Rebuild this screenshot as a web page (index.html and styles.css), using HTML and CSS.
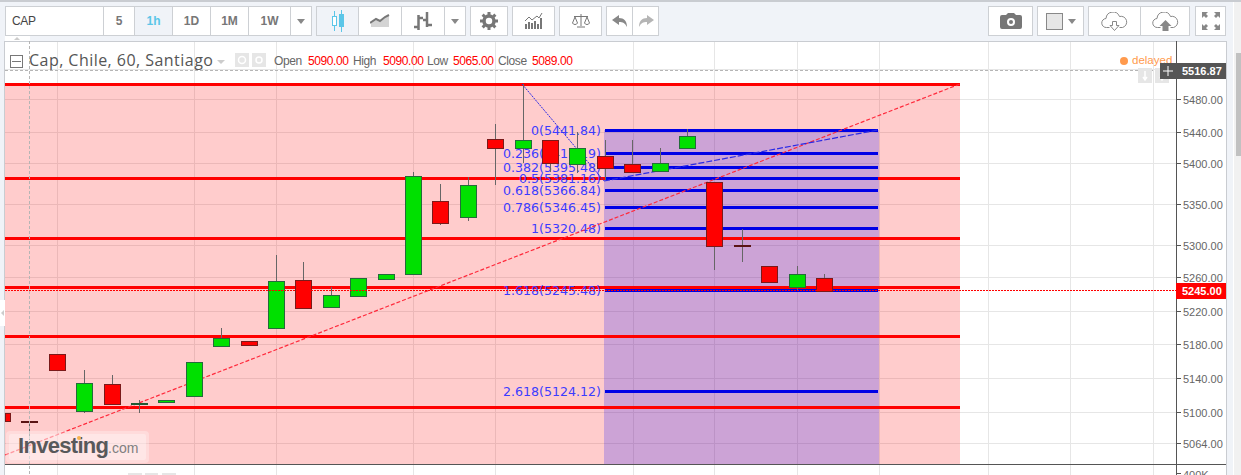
FILE: index.html
```html
<!DOCTYPE html>
<html lang="en">

<head>
  <meta charset="UTF-8">
  <title>Cap, Chile, 60, Santiago</title>
  <link rel="stylesheet" href="styles.css">
</head>

<body>
  <div class="page">
    <div class="main">
      <div class="toolbar">
        <div class="group">
          <div class="btn btn-symbol">CAP</div>
          <div class="btn w31">5</div>
          <div class="btn w38 active">1h</div>
          <div class="btn w38">1D</div>
          <div class="btn w38">1M</div>
          <div class="btn w42">1W</div>
          <div class="btn w21"><span class="caret"></span></div>
        </div>
        <div class="group">
          <div class="btn w41 active">
            <svg width="20" height="22" viewBox="0 0 20 22"><path class="ic-blue" d="M6.500 1v5M6.500 16v5M13.500 0v5M13.500 17v5" /><rect class="ic-blue-box" x="4.500" y="6.500" width="4" height="9" /><rect x="11" y="4" width="5" height="13" fill="#5bc6e8" /></svg>
          </div>
          <div class="btn w43">
            <svg width="20" height="14" viewBox="0 0 20 14"><path d="M1 13V9l5-3 4 2 5-4 4-2v11z" fill="#d4d4d4" /><path d="M0 9l6-4 4 2 5-4 4-2" fill="none" stroke="#777" stroke-width="2" /></svg>
          </div>
          <div class="btn w43">
            <svg width="18" height="18" viewBox="0 0 18 18"><path d="M0 15h5M4.500 18V3M5 6h4M13 0v15M9 8h4M13 13h5" fill="none" stroke="#777" stroke-width="2.500" /></svg>
          </div>
          <div class="btn w21"><span class="caret"></span></div>
        </div>
        <div class="group">
          <div class="btn w36">
            <svg width="18" height="18" viewBox="0 0 18 18"><circle cx="9" cy="9" r="5" fill="none" stroke="#777" stroke-width="3.500" /><path d="M9 0v18M0 9h18M2.600 2.600l12.800 12.800M15.400 2.600L2.600 15.400" stroke="#777" stroke-width="3" stroke-dasharray="3 12 3 0" /></svg>
          </div>
        </div>
        <div class="group">
          <div class="btn w41">
            <svg width="18" height="16" viewBox="0 0 18 16"><path d="M1 16v-5M4 16V9M7 16v-6M10 16V8M13 16v-5M16 16V5" stroke="#777" stroke-width="2" /><path d="M0 8l4-4 3 3 5-4 2 2 3-5" fill="none" stroke="#777" /></svg>
          </div>
        </div>
        <div class="group">
          <div class="btn w41">
            <svg width="18" height="14" viewBox="0 0 18 14"><path d="M9 0v12M5 13h8M2 2.500h14" stroke="#777" /><path d="M3 3L.5 9a2.800 2.800 0 0 0 5 0zM15 3l-2.500 6a2.800 2.800 0 0 0 5 0z" fill="none" stroke="#777" /></svg>
          </div>
        </div>
        <div class="group">
          <div class="btn w25">
            <svg width="16" height="12" viewBox="0 0 16 12"><path d="M0 5l7-5v3c5 0 8 3 8 9-2-4-4-5-8-5v3z" fill="#888" /></svg>
          </div>
          <div class="btn w26">
            <svg width="16" height="12" viewBox="0 0 16 12"><path d="M16 5L9 0v3c-5 0-8 3-8 9 2-4 4-5 8-5v3z" fill="#b5b5b5" /></svg>
          </div>
        </div>
        <div class="toolbar-right">
          <div class="group">
            <div class="btn w43">
              <svg width="22" height="16" viewBox="0 0 22 16"><path fill-rule="evenodd" d="M2 2h4l2-2h6l2 2h4a2 2 0 0 1 2 2v10a2 2 0 0 1-2 2H2a2 2 0 0 1-2-2V4a2 2 0 0 1 2-2zm9 3a4 4 0 1 0 0 8 4 4 0 0 0 0-8zm0 2a2 2 0 1 1 0 4 2 2 0 0 1 0-4z" fill="#777" /></svg>
            </div>
          </div>
          <div class="group">
            <div class="btn w45 color-btn"><span class="swatch"></span><span class="caret"></span></div>
          </div>
          <div class="group">
            <div class="btn w51">
              <svg width="27" height="19" viewBox="0 0 27 19"><path d="M8.500 15.500H5.500a4.500 4.500 0 0 1-.5-9 7 7 0 0 1 13.500-2 5.500 5.500 0 0 1 3 11h-3" fill="none" stroke="#888" /><path d="M11.500 9.500h4v4h2.500l-4.500 5-4.500-5h2.500z" fill="#fff" stroke="#888" /></svg>
            </div>
            <div class="btn w49">
              <svg width="27" height="19" viewBox="0 0 27 19"><path d="M8.500 15.500H5.500a4.500 4.500 0 0 1-.5-9 7 7 0 0 1 13.500-2 5.500 5.500 0 0 1 3 11h-3" fill="none" stroke="#888" /><path d="M13.500 8l6 6h-3v5h-6v-5h-3z" fill="#888" /></svg>
            </div>
          </div>
          <div class="group">
            <div class="btn w29">
              <svg width="18" height="18" viewBox="0 0 18 18"><path d="M0 0h6L4 2l2 2-2 2-2-2-2 2zM18 0h-6l2 2-2 2 2 2 2-2 2 2zM0 18h6l-2-2 2-2-2-2-2 2-2-2zM18 18h-6l2-2-2-2 2-2 2 2 2-2z" fill="#888" /></svg>
            </div>
          </div>
        </div>
      </div>

      <svg class="chart" width="1233" height="439" viewBox="0 36 1233 439">
        <rect class="frame" x="4.500" y="41.500" width="1222" height="440" />
        <rect class="tab" x="5" y="36" width="25" height="5" />
        <path class="tab-arrow" d="M14 40l3-3 3 3z" />

        <!-- grid, filled in by chart.js -->
        <g id="grid"></g>

        <rect class="zone-red" x="5" y="84" width="955" height="380" />
        <rect class="zone-blue" x="604" y="130" width="275" height="334" />

        <g id="levels"></g>

        <g class="fib-labels">
          <text x="601" y="135">0(5441.84)</text>
          <text x="601" y="158">0.236(5413.19)</text>
          <text x="601" y="172">0.382(5395.48)</text>
          <text x="601" y="183">0.5(5381.16)</text>
          <text x="601" y="195">0.618(5366.84)</text>
          <text x="601" y="212">0.786(5346.45)</text>
          <text x="601" y="233">1(5320.48)</text>
          <text x="601" y="295">1.618(5245.48)</text>
          <text x="601" y="396">2.618(5124.12)</text>
        </g>

        <line class="trend-red" x1="5" y1="455" x2="960" y2="84" />
        <line class="trend-blue-dot" x1="522" y1="84" x2="604" y2="181" />
        <line class="trend-blue" x1="604" y1="181" x2="878" y2="130" />

        <g id="candles"></g>

        <line class="last-price" x1="5" y1="290.500" x2="1176" y2="290.500" />
        <line class="crosshair" x1="5" y1="70.500" x2="1176" y2="70.500" />
        <line class="crosshair" x1="29.500" y1="41" x2="29.500" y2="475" />

        <!-- legend -->
        <rect class="collapse" x="10.500" y="55.500" width="12" height="12" />
        <line class="collapse-minus" x1="12" y1="61.500" x2="21" y2="61.500" />
        <text class="legend-title" x="29" y="66">Cap, Chile, 60, Santiago</text>
        <path class="legend-caret" d="M217 60h8l-4 4z" />
        <rect class="legend-box" x="235" y="53" width="14" height="14" />
        <circle class="legend-eye" cx="242" cy="60" r="3.500" />
        <rect class="legend-box" x="252" y="53" width="14" height="14" />
        <circle class="legend-eye" cx="259" cy="60" r="3" />
        <g class="legend-values">
          <text x="274" y="65">Open</text>
          <text class="val" x="308" y="65">5090.00</text>
          <text x="353" y="65">High</text>
          <text class="val" x="383" y="65">5090.00</text>
          <text x="427" y="65">Low</text>
          <text class="val" x="453" y="65">5065.00</text>
          <text x="498" y="65">Close</text>
          <text class="val" x="532" y="65">5089.00</text>
        </g>

        <circle class="delayed-dot" cx="1124" cy="61" r="4" />
        <text class="delayed" x="1132" y="64">delayed</text>

        <rect class="legend-box" x="1138" y="68" width="14" height="15" />
        <path class="mini-arrow" d="M1145 71v9M1143 77l2 3 2-3" />
        <rect class="legend-box" x="1155" y="68" width="14" height="15" />
        <path class="mini-arrow" d="M1162 71v9M1160 77l2 3 2-3" />

        <!-- logo -->
        <rect class="logo-outer" x="6" y="431" width="143" height="32" rx="4" />
        <rect class="logo-inner" x="9" y="434" width="137" height="26" rx="2" />
        <text class="logo-name" x="18" y="453">Investing</text>
        <text class="logo-com" x="108" y="453">.com</text>
        <circle class="logo-dot" cx="79" cy="438" r="2" />

        <!-- price axis -->
        <rect class="axis-bg" x="1177" y="42" width="49" height="433" />
        <line class="axis-line" x1="1176.500" y1="41" x2="1176.500" y2="475" />
        <line class="axis-line" x1="5" y1="464.500" x2="1226" y2="464.500" />
        <g id="axis"></g>

        <rect class="tag-dark" x="1160" y="63" width="66" height="16" />
        <path class="tag-plus" d="M1168 66v10M1163 71h10" />
        <text class="tag-text" x="1182" y="75">5516.87</text>
        <rect class="tag-red" x="1176" y="283" width="50" height="16" />
        <text class="tag-text" x="1182" y="295">5245.00</text>

        <text class="axis-text" x="1183" y="479">400K</text>
        <line class="axis-line" x1="1176" y1="473.500" x2="1181" y2="473.500" />

        <!-- small controls along the bottom and the left edge -->
        <rect class="legend-box" x="128" y="473" width="14" height="2" />
        <rect class="legend-box" x="145" y="473" width="13" height="2" />
        <rect class="legend-box" x="162" y="473" width="14" height="2" />
        <rect class="side-tab" x="0" y="300" width="5" height="26" />
        <path class="side-arrow" d="M1 313l3-3v6z" />
      </svg>
    </div>
    <div class="scrollbar"><div class="thumb"></div></div>
  </div>
  <script src="chart.js"></script>
</body>

</html>
```

FILE: styles.css
```css
* {
  box-sizing: border-box;
  margin: 0;
  padding: 0;
}

body {
  font-family: "Liberation Sans", Arial, sans-serif;
  background: #f0f3f8;
  overflow: hidden;
}

.page {
  display: flex;
  height: 475px;
  border-top: 2px solid #c9ccd1;
}

.main {
  width: 1233px;
}

/* Toolbar */
.toolbar {
  display: flex;
  gap: 4px;
  height: 34px;
  padding: 4px 7px 0 5px;
}

.toolbar-right {
  display: flex;
  gap: 4px;
  margin-left: auto;
}

.toolbar-right .group:last-child {
  margin-left: 1px;
}

.group {
  display: flex;
  box-sizing: content-box;
  height: 28px;
  border: 1px solid #cdd0d4;
  background: #fff;
}

.btn {
  display: flex;
  align-items: center;
  justify-content: center;
  border-left: 1px solid #cdd0d4;
  font-size: 12px;
  font-weight: bold;
  color: #777;
}

.btn:first-child {
  border-left: none;
}

.btn.active {
  background: #f0f3f8;
  color: #5bc6e8;
}

.btn-symbol {
  width: 97px;
  justify-content: flex-start;
  padding-left: 6px;
  font-weight: normal;
  letter-spacing: -0.300px;
  color: #444;
}

.w21 { width: 21px; }
.w25 { width: 25px; }
.w26 { width: 26px; }
.w29 { width: 29px; }
.w31 { width: 31px; }
.w36 { width: 36px; }
.w38 { width: 38px; }
.w41 { width: 41px; }
.w42 { width: 42px; }
.w43 { width: 43px; }
.w45 { width: 45px; }
.w49 { width: 49px; }
.w51 { width: 51px; }

.caret {
  width: 0;
  height: 0;
  border-left: 4px solid transparent;
  border-right: 4px solid transparent;
  border-top: 5px solid #888;
}

.color-btn {
  gap: 5px;
}

.swatch {
  width: 17px;
  height: 17px;
  background: #e6e6e6;
  border: 1px solid #888;
}

.ic-blue {
  fill: none;
  stroke: #5bc6e8;
}

.ic-blue-box {
  fill: #fff;
  stroke: #5bc6e8;
}

/* Scrollbar */
.scrollbar {
  width: 8px;
  background: #f1f1f1;
  padding-left: 2px;
  border-left: 1px solid #fff;
}

.thumb {
  width: 5px;
  height: 103px;
  margin-top: 51px;
  background: #c1c1c1;
}

/* Chart */
.chart {
  display: block;
}

.chart text {
  font-family: "Liberation Sans", Arial, sans-serif;
}

.frame {
  fill: #fff;
  stroke: #c9ccd1;
}

.tab {
  fill: #fff;
}

.tab-arrow,
.side-arrow {
  fill: #ccc;
}

.side-tab {
  fill: #fff;
}

.grid-line {
  stroke: #e6e6e6;
}

.zone-red {
  fill: rgba(255, 0, 0, 0.2);
}

.zone-blue {
  fill: rgba(0, 0, 255, 0.2);
}

.level-red {
  stroke: #f00;
  stroke-width: 3;
}

.level-blue {
  stroke: #0000e6;
  stroke-width: 3;
}

.chart .fib-labels text {
  font-family: "DejaVu Sans", Verdana, sans-serif;
  font-size: 12.600px;
  fill: #3c3cff;
  text-anchor: end;
}

.trend-red {
  stroke: #ff2a3c;
  stroke-width: 1.200;
  stroke-dasharray: 4 2;
}

.trend-blue {
  stroke: #2a2ae6;
  stroke-width: 1.200;
  stroke-dasharray: 6 2;
}

.trend-blue-dot {
  stroke: #2a2ae6;
  stroke-dasharray: 2 1;
}

.wick {
  stroke: #666;
}

.body-up {
  fill: #00e000;
  stroke: #236b3a;
}

.body-down {
  fill: #f00;
  stroke: #7a1a1a;
}

.doji-up {
  stroke: #1f5a33;
  stroke-width: 2;
}

.doji-down {
  stroke: #5a1414;
  stroke-width: 2;
}

.last-price {
  stroke: #f00;
  stroke-dasharray: 2 1;
}

.crosshair {
  stroke: #b5b5b5;
  stroke-dasharray: 3 2;
}

.collapse {
  fill: none;
  stroke: #777;
}

.collapse-minus {
  stroke: #777;
}

.chart .legend-title {
  font-family: "Open Sans", sans-serif;
  font-size: 16px;
  fill: #555;
  letter-spacing: 0.460px;
}

.legend-caret {
  fill: #ccc;
}

.legend-box {
  fill: #e6e6e6;
}

.legend-eye {
  fill: none;
  stroke: #fff;
  stroke-width: 1.500;
}

.mini-arrow {
  fill: none;
  stroke: #fff;
  stroke-width: 1.500;
}

.legend-values text {
  font-size: 12px;
  letter-spacing: -0.400px;
  fill: #666;
}

.legend-values .val {
  fill: #f00;
}

.delayed-dot {
  fill: #ff9a4d;
}

.delayed {
  font-size: 11.500px;
  fill: #ff9a4d;
}

.logo-outer {
  fill: rgba(255, 255, 255, 0.3);
}

.logo-inner {
  fill: rgba(255, 255, 255, 0.3);
}

.chart .logo-name {
  font-size: 22px;
  font-weight: bold;
  letter-spacing: -0.700px;
  fill: #58595b;
}

.logo-com {
  font-size: 14px;
  fill: #808080;
}

.logo-dot {
  fill: #f7b34d;
}

.axis-bg {
  fill: #fff;
}

.axis-line {
  stroke: #555;
}

.axis-text {
  font-size: 11px;
  fill: #666;
}

.tag-dark {
  fill: #555;
}

.tag-plus {
  stroke: #fff;
  fill: none;
}

.tag-red {
  fill: #f00;
}

.tag-text {
  font-size: 11px;
  font-weight: bold;
  fill: #fff;
}
```

FILE: chart.js
```js
const NS = "http://www.w3.org/2000/svg";

function add(parent, tag, attrs, text) {
  const el = document.createElementNS(NS, tag);
  for (const k in attrs) el.setAttribute(k, attrs[k]);
  if (text) el.textContent = text;
  parent.appendChild(el);
}

// grid
const grid = document.getElementById("grid");
[57, 194, 276, 413, 495, 633, 714, 797, 879, 988, 1070, 1153].forEach(x => {
  add(grid, "line", { class: "grid-line", x1: x + 0.5, y1: 42, x2: x + 0.5, y2: 475 });
});
const ticks = [
  [69, null], [99, "5480.00"], [132, "5440.00"], [163, "5400.00"], [204, "5350.00"],
  [245, "5300.00"], [277, "5260.00"], [311, "5220.00"], [344, "5180.00"],
  [378, "5140.00"], [412, "5100.00"], [443, "5064.00"]
];
ticks.forEach(t => {
  add(grid, "line", { class: "grid-line", x1: 5, y1: t[0] + 0.5, x2: 1176, y2: t[0] + 0.5 });
});

// horizontal levels and fibonacci lines
const levels = document.getElementById("levels");
[84, 178, 238, 287, 336, 407].forEach(y => {
  add(levels, "line", { class: "level-red", x1: 5, y1: y + 0.5, x2: 960, y2: y + 0.5 });
});
[130, 153, 167, 178, 190, 207, 228, 290, 391].forEach(y => {
  add(levels, "line", { class: "level-blue", x1: 605, y1: y + 0.5, x2: 878, y2: y + 0.5 });
});

// x, body top, body bottom, wick top, wick bottom, up?
const data = [
  [2, 413, 421, 413, 421, 0],
  [29, 422, 422, 422, 440, 0],
  [57, 354, 370, 354, 370, 0],
  [84, 383, 411, 370, 413, 1],
  [112, 384, 404, 375, 404, 0],
  [139, 404, 404, 400, 413, 1],
  [166, 400, 402, 400, 402, 1],
  [194, 362, 396, 362, 396, 1],
  [221, 338, 346, 328, 346, 1],
  [249, 341, 345, 341, 345, 0],
  [276, 281, 328, 255, 328, 1],
  [303, 280, 308, 262, 308, 0],
  [331, 295, 307, 287, 307, 1],
  [358, 278, 296, 278, 296, 1],
  [386, 274, 279, 274, 279, 1],
  [413, 176, 274, 172, 274, 1],
  [440, 201, 223, 184, 225, 0],
  [468, 185, 217, 177, 221, 1],
  [495, 139, 148, 124, 185, 0],
  [523, 140, 148, 84, 163, 1],
  [550, 140, 163, 140, 172, 0],
  [577, 148, 164, 132, 173, 1],
  [605, 156, 168, 140, 180, 0],
  [632, 164, 172, 140, 172, 0],
  [660, 163, 171, 148, 171, 1],
  [687, 136, 148, 129, 148, 1],
  [714, 182, 246, 182, 270, 0],
  [742, 246, 246, 229, 262, 0],
  [769, 266, 282, 266, 282, 0],
  [797, 274, 287, 266, 290, 1],
  [824, 278, 291, 274, 291, 0]
];

const candles = document.getElementById("candles");
data.forEach(d => {
  const x = d[0] + 0.5;
  if (d[0] >= 5) add(candles, "line", { class: "wick", x1: x, y1: d[3], x2: x, y2: d[4] });
  if (d[1] === d[2]) {
    add(candles, "line", { class: d[5] ? "doji-up" : "doji-down", x1: d[0] - 8, y1: d[1], x2: d[0] + 9, y2: d[1] });
  } else {
    const left = Math.max(d[0] - 8, 5);
    add(candles, "rect", {
      class: d[5] ? "body-up" : "body-down",
      x: left + 0.5, y: d[1] + 0.5, width: d[0] + 8 - left, height: d[2] - d[1]
    });
  }
});

// price axis
const axis = document.getElementById("axis");
ticks.forEach(t => {
  if (!t[1]) return;
  add(axis, "line", { class: "axis-line", x1: 1176, y1: t[0] + 0.5, x2: 1181, y2: t[0] + 0.5 });
  add(axis, "text", { class: "axis-text", x: 1183, y: t[0] + 4.5 }, t[1]);
});
```
